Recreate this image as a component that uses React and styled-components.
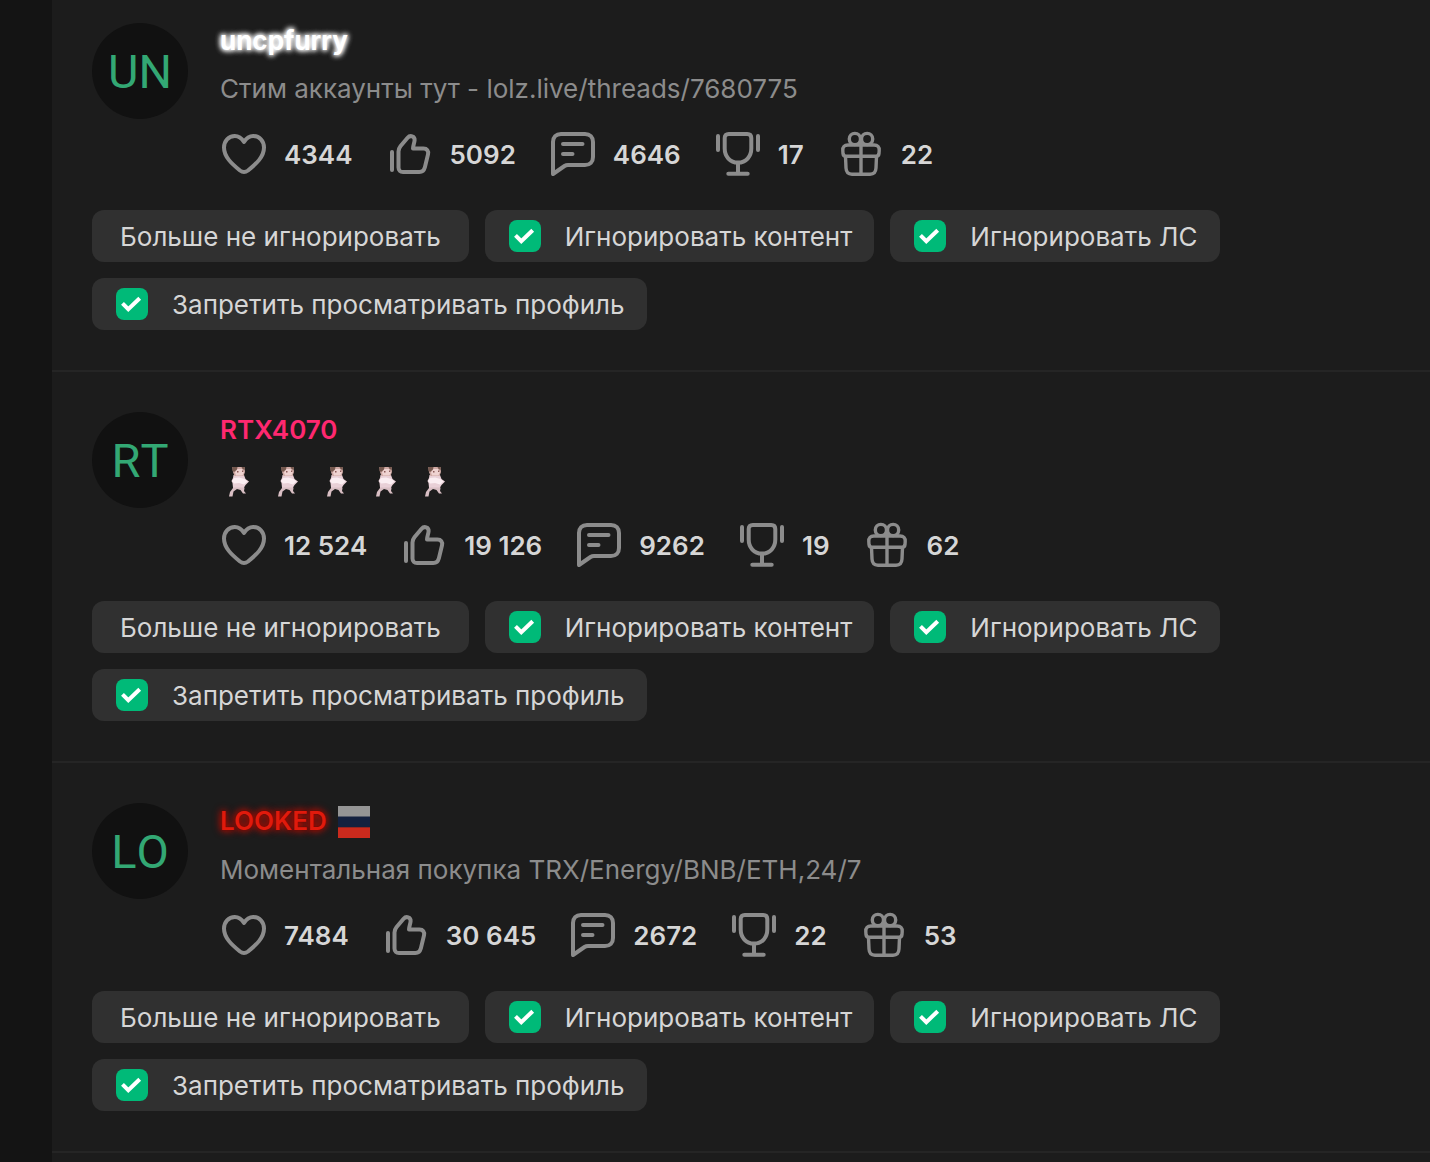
import React from 'react'
import styled, { createGlobalStyle, css, ThemeProvider } from 'styled-components'

const theme = {
  palette: {
    page: '#141414',
    panel: '#1c1c1c',
    line: '#252525',
    control: '#303030',
    avatar: '#111111',
    text: '#d6d6d6',
    muted: '#8c8c8c',
    accent: '#00ba78',
    initials: '#33a874',
  },
}

const GlobalStyle = createGlobalStyle`
  *, *::before, *::after {
    box-sizing: border-box;
  }

  body {
    margin: 0;
    background-color: #141414;
  }
`

const Page = styled.div`
  min-height: 100vh;
  padding-left: 52px;
  overflow: hidden;
  background-color: ${props => props.theme.palette.page};
  color: ${props => props.theme.palette.text};
  font-family: Inter, 'Noto Sans', sans-serif;
  font-size: 26px;
`

const UserList = styled.ul`
  min-height: 100vh;
  margin: 0;
  padding: 0;
  list-style: none;
  background-color: ${props => props.theme.palette.panel};
`

const UserItem = styled.li`
  padding: 40px;
  border-bottom: 2px solid ${props => props.theme.palette.line};

  &:first-child {
    padding-top: 23px;
  }
`

const UserHeader = styled.div`
  display: flex;
  align-items: flex-start;
  gap: 32px;
`

const Avatar = styled.a`
  display: flex;
  flex: none;
  align-items: center;
  justify-content: center;
  width: 96px;
  height: 96px;
  border-radius: 50%;
  background-color: ${props => props.theme.palette.avatar};
  color: ${props => props.theme.palette.initials};
  font-family: Roboto, sans-serif;
  font-size: 47px;
  font-kerning: none;
  text-decoration: none;
`

const UserInfo = styled.div`
  display: flex;
  flex-direction: column;
  min-width: 0;
`

const NameRow = styled.div`
  display: flex;
  align-items: flex-start;
  gap: 11px;
`

const nameLooks = {
  glow: css`
    color: #fff;
    font-weight: 700;
    text-shadow: 0 0 6px #fff, 0 0 4px #fff, 0 0 6px #fff;
  `,
  pink: css`
    color: #ff2870;
  `,
  red: css`
    color: #e01a0c;
    text-shadow: 0 0 2px #5c0500, 0 0 6px #c00d00, 0 0 8px #c00d00;
  `,
}

const Username = styled.a`
  font-weight: 600;
  line-height: 36px;
  text-decoration: none;
  ${props => nameLooks[props.$look]}
`

const FlagIcon = styled.svg`
  width: 32px;
  height: 32px;
  margin: 3px 0 2px;
`

const Status = styled.div`
  display: flex;
  min-height: 36px;
  margin: 12px 0 25px;
  color: ${props => props.theme.palette.muted};
  line-height: 36px;
`

const Emoji = styled.svg`
  width: 38px;
  height: 38px;
  margin-right: 11px;
`

const Stats = styled.ul`
  display: flex;
  flex-wrap: wrap;
  gap: 8px 33px;
  margin: 0;
  padding: 0;
  list-style: none;
`

const Stat = styled.li`
  display: flex;
  align-items: center;
  gap: 16px;
  height: 44px;
  font-weight: 600;
`

const StatIcon = styled.svg`
  width: 48px;
  height: 48px;
  fill: none;
  stroke: ${props => props.theme.palette.muted};
  stroke-width: ${props => props.$stroke || 4};
  stroke-linecap: round;
  stroke-linejoin: round;
`

const Actions = styled.div`
  display: flex;
  flex-wrap: wrap;
  gap: 16px;
  margin-top: 34px;
`

const control = css`
  height: 52px;
  border: 0;
  border-radius: 12px;
  background-color: ${props => props.theme.palette.control};
  color: inherit;
  font: inherit;
  cursor: pointer;
`

const Button = styled.button`
  ${control}
  padding: 0 28px;
`

const Toggle = styled.label`
  ${control}
  display: flex;
  align-items: center;
  gap: 24px;
  padding: 0 22px 0 24px;
`

const CheckboxBox = styled.span`
  display: grid;

  > * {
    grid-area: 1 / 1;
  }
`

const CheckboxInput = styled.input`
  appearance: none;
  width: 32px;
  height: 32px;
  margin: 0;
  border-radius: 8px;
  background-color: #454545;
  cursor: pointer;

  &:checked {
    background-color: ${props => props.theme.palette.accent};
  }

  &:not(:checked) + svg {
    visibility: hidden;
  }
`

const CheckMark = styled.svg`
  width: 32px;
  height: 32px;
  fill: none;
  stroke: #fff;
  stroke-width: 4;
  pointer-events: none;
`

const icons = {
  likes: (
    <path d="M24 12C21.5 8 18.5 6 14.8 6C8.5 6 4 11 4 17.5C4 27 12 34 20 40.5C22.8 42.6 25.2 42.6 28 40.5C36 34 44 27 44 17.5C44 11 39.5 6 33.2 6C29.5 6 26.5 8 24 12Z" />
  ),
  sympathies: (
    <>
      <path d="M6 22V40" />
      <path d="M12.5 21.5C12.5 19 13.4 17.5 14.6 16L21.6 7.8C24.2 4.8 28.9 6.2 28.6 10.2C28.4 13 27 15.6 27 18.5H37.5C41 18.5 42.8 21 42 24.4L38.8 37.6C38 40.6 36.4 42 33.4 42H17C14.3 42 12.5 40.4 12.5 37.6Z" />
    </>
  ),
  messages: (
    <>
      <path d="M4 44V12C4 7 7 4 12 4H36C41 4 44 7 44 12V27C44 32 41 35 36 35H19C17.5 35 16.6 35.3 15.5 36Z" />
      <path d="M14 14H33.5M14 24H23.5" />
    </>
  ),
  trophies: (
    <>
      <path d="M14.7 4H33.3C35.9 4 37.3 5.4 37.3 8V18.5C37.3 26.5 32 32.6 24 32.6C16 32.6 10.700 26.5 10.700 18.5V8C10.7 5.4 12.1 4 14.7 4Z" />
      <path d="M4 6V20M44 6V20M24 33V43.5M14.3 43.7H33.7" />
    </>
  ),
  gifts: (
    <>
      <circle cx="17.9" cy="9" r="5.6" />
      <circle cx="30.1" cy="9" r="5.6" />
      <path d="M11 15H37C40.5 15 42.5 17 42.2 20.5L42 23.5C41.8 25.4 40.8 26.3 39 26.3H9C7.2 26.3 6.2 25.4 6 23.5L5.8 20.5C5.5 17 7.5 15 11 15Z" />
      <path d="M8.5 26.5L9 38C9.2 42.2 11 44.2 15 44.2H33C37 44.2 38.8 42.2 39 38L39.5 26.5M24 14.5V44.2" />
    </>
  ),
}

const Hamster = () => (
  <Emoji viewBox="0 0 38 38" aria-hidden="true">
    <path fill="#d9bfc4" d="M13 25H23L24.500 28L24 31L26 33.500L23 33.500L20.500 30L17 29L13.500 31.500L12.500 36.500H9L10 32L13 28Z" />
    <path fill="#e9d0d7" d="M13.500 15H24L25.500 19L29 21.500L25.500 25L24 27.500H13L12.500 23L11.500 21L13 18Z" />
    <path fill="#fbeef2" d="M14 18L19 17.500L24.500 19L27.500 21.500L24 24.500L19 23L14 23.500L12 21Z" />
    <path fill="#cfa9a4" d="M12.300 7H24.500L25 12L23.500 16H14.500L13 12Z" />
    <path fill="#76594f" d="M12.300 7H17.500L17 9.500L14 12L12.500 11ZM21.500 7H24.700V10L22.500 9Z" />
    <path fill="#efd3d1" d="M17.500 9L22 9L24 12L22.500 15.500H16L15 12.500Z" />
    <path fill="#8a5a58" d="M17 11H18.500V12.500H17ZM22 10.500H23.300V12H22Z" />
  </Emoji>
)

const RussianFlag = () => (
  <FlagIcon viewBox="0 0 32 32" role="img" aria-label="Россия">
    <path fill="#959595" d="M0 0H32V11H0Z" />
    <path fill="#14213f" d="M0 10.5H32V21.5H0Z" />
    <path fill="#cb2a1d" d="M0 21.3H32V32H0Z" />
  </FlagIcon>
)

const Checkbox = ({ children }) => (
  <Toggle>
    <CheckboxBox>
      <CheckboxInput type="checkbox" defaultChecked />
      <CheckMark viewBox="0 0 32 32" aria-hidden="true">
        <path d="M6.5 15.3L12.3 21.2L23.7 10.2" />
      </CheckMark>
    </CheckboxBox>
    {children}
  </Toggle>
)

const users = [
  {
    name: 'uncpfurry',
    initials: 'UN',
    look: 'glow',
    status: 'Стим аккаунты тут - lolz.live/threads/7680775',
    stats: { likes: '4344', sympathies: '5092', messages: '4646', trophies: '17', gifts: '22' },
  },
  {
    name: 'RTX4070',
    initials: 'RT',
    look: 'pink',
    status: [1, 2, 3, 4, 5].map(key => <Hamster key={key} />),
    stats: { likes: '12 524', sympathies: '19 126', messages: '9262', trophies: '19', gifts: '62' },
  },
  {
    name: 'LOOKED',
    initials: 'LO',
    look: 'red',
    flag: <RussianFlag />,
    status: 'Моментальная покупка TRX/Energy/BNB/ETH,24/7',
    stats: { likes: '7484', sympathies: '30 645', messages: '2672', trophies: '22', gifts: '53' },
  },
]

const IgnoredUser = ({ name, initials, look, flag, status, stats }) => (
  <UserItem>
    <UserHeader>
      <Avatar href={`#${name}`}>{initials}</Avatar>
      <UserInfo>
        <NameRow>
          <Username href={`#${name}`} $look={look}>
            {name}
          </Username>
          {flag}
        </NameRow>
        <Status>{status}</Status>
        <Stats>
          {Object.keys(stats).map(key => (
            <Stat key={key}>
              <StatIcon viewBox="0 0 48 48" $stroke={key === 'gifts' ? 3.4 : 4} aria-hidden="true">
                {icons[key]}
              </StatIcon>
              {stats[key]}
            </Stat>
          ))}
        </Stats>
      </UserInfo>
    </UserHeader>
    <Actions>
      <Button type="button">Больше не игнорировать</Button>
      <Checkbox>Игнорировать контент</Checkbox>
      <Checkbox>Игнорировать ЛС</Checkbox>
      <Checkbox>Запретить просматривать профиль</Checkbox>
    </Actions>
  </UserItem>
)

const App = () => (
  <ThemeProvider theme={theme}>
    <GlobalStyle />
    <Page>
      <UserList>
        {users.map(user => (
          <IgnoredUser key={user.name} {...user} />
        ))}
      </UserList>
    </Page>
  </ThemeProvider>
)

export default App
